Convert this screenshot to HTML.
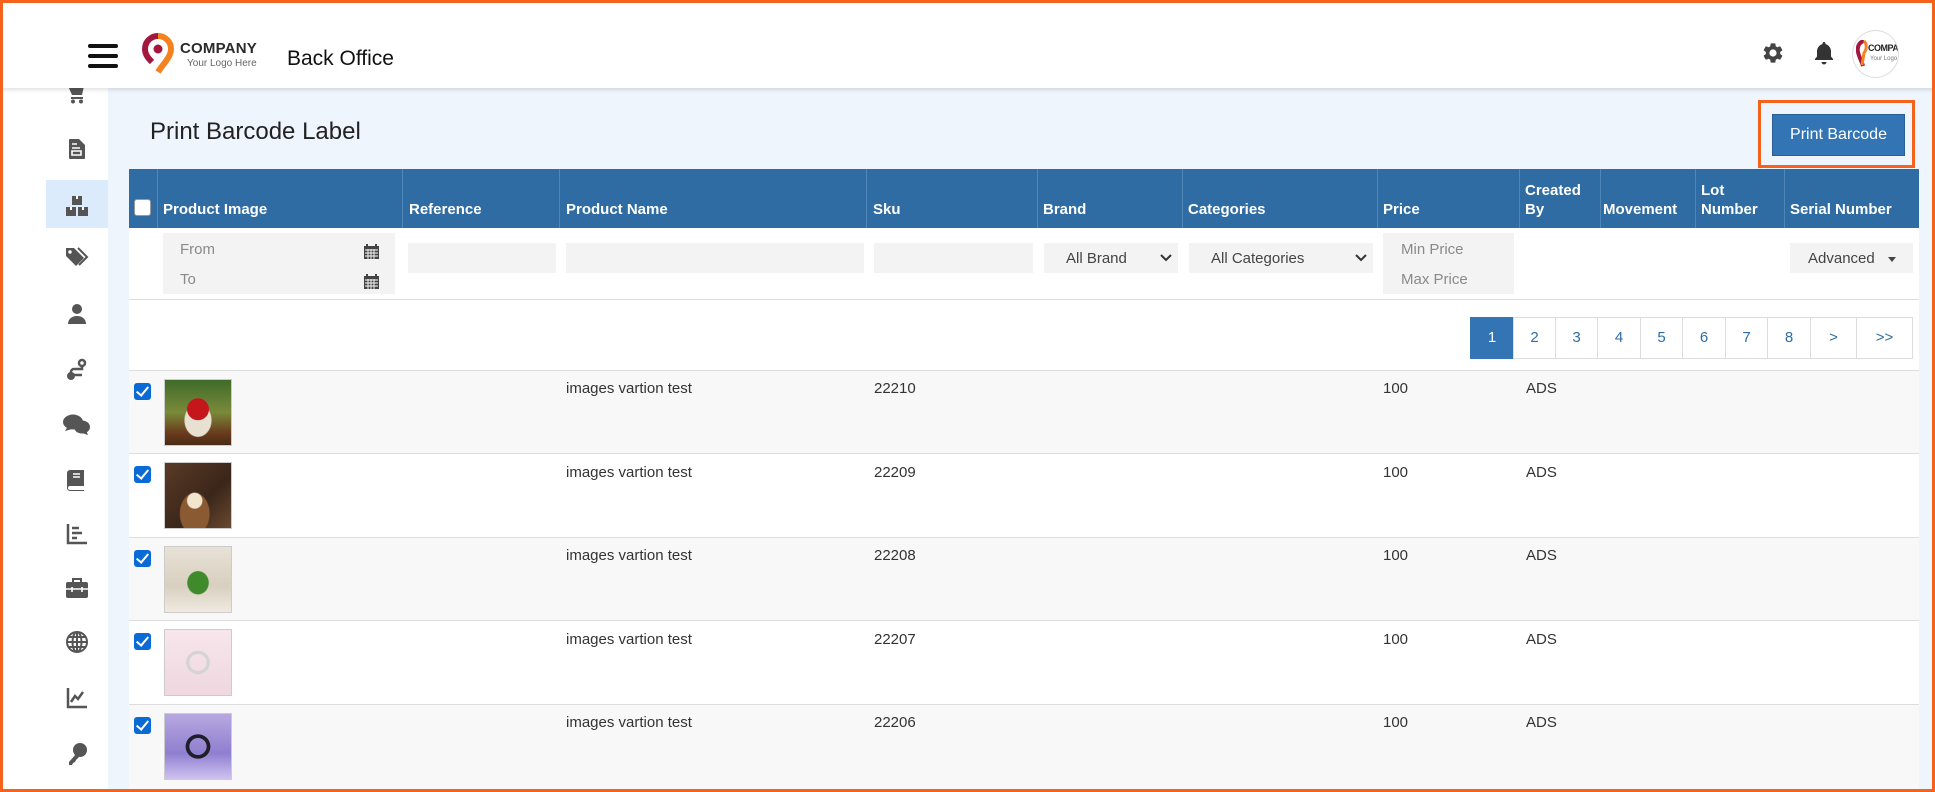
<!DOCTYPE html>
<html><head><meta charset="utf-8"><style>
*{box-sizing:border-box;margin:0;padding:0}
body{width:1935px;height:792px;overflow:hidden;background:#fff;font-family:"Liberation Sans",sans-serif;color:#333;position:relative}
.a{position:absolute}
.frame{left:0;top:0;width:1935px;height:792px;border:3px solid #f4621c;z-index:50;pointer-events:none}
.hdr{left:0;top:0;width:1935px;height:88px;background:#fff;box-shadow:0 2px 4px rgba(0,0,0,.12);z-index:10}
.side{left:42px;top:88px;width:66px;height:704px;background:#fff}
.main{left:108px;top:88px;width:1827px;height:704px;background:#eef5fc}
.th{top:169px;height:59px;background:#2f6ca3;color:#fff;font-weight:bold;font-size:15px}
.th span{position:absolute;bottom:9px;left:6px;line-height:19px}
.vl{top:169px;height:59px;width:1px;background:#4f86b8}
.inp{background:#f3f3f3}
.ph{color:#8a8a8a;font-size:15px}
.row{left:129px;width:1790px;height:83px;border-top:1px solid #ddd}
.cb{width:17px;height:17px;background:#0b6bd6;border-radius:3px}
.cb:after{content:"";position:absolute;left:5px;top:1px;width:5px;height:10px;border:solid #fff;border-width:0 2.5px 2.5px 0;transform:rotate(40deg)}
.txt{font-size:15px;color:#333}
.pg{top:317px;height:42px;border:1px solid #ddd;color:#2f6ca3;font-size:15px;text-align:center;line-height:40px;background:#fff}
.ic{fill:#555}
</style></head><body>
<div class="a frame"></div>
<div class="a hdr">
  <div class="a" style="left:88px;top:44px;width:30px;height:4px;background:#111;border-radius:2px"></div>
  <div class="a" style="left:88px;top:54px;width:30px;height:4px;background:#111;border-radius:2px"></div>
  <div class="a" style="left:88px;top:64px;width:30px;height:4px;background:#111;border-radius:2px"></div>
  <svg class="a" style="left:141px;top:33px" width="34" height="41" viewBox="0 0 34 41"><path d="M17 3a13 13 0 0 0-13 13c0 6 4 10 7 13" fill="none" stroke="#a3173f" stroke-width="6"/><path d="M17 3a13 13 0 0 1 13 13c0 8-8 15-13 23" fill="none" stroke="#f4821f" stroke-width="6"/><circle cx="17" cy="16" r="4.5" fill="#a3173f"/></svg>
  <div class="a" style="left:180px;top:40px;font-size:15px;font-weight:bold;color:#2a2a2a;letter-spacing:.2px">COMPANY</div>
  <div class="a" style="left:187px;top:58px;font-size:10px;color:#666">Your Logo Here</div>
  <div class="a" style="left:287px;top:47px;font-size:21px;color:#111">Back Office</div>
  <svg class="a" style="left:1761px;top:41px" width="24" height="24" viewBox="0 0 24 24"><path fill="#444" d="M19.14 12.94c.04-.3.06-.61.06-.94s-.02-.64-.07-.94l2.03-1.58a.49.49 0 0 0 .12-.61l-1.92-3.32a.49.49 0 0 0-.59-.22l-2.39.96c-.5-.38-1.03-.7-1.62-.94l-.36-2.54a.48.48 0 0 0-.48-.41h-3.84c-.24 0-.43.17-.47.41l-.36 2.54c-.59.24-1.13.57-1.62.94l-2.39-.96a.49.49 0 0 0-.59.22L2.74 8.87a.48.48 0 0 0 .12.61l2.03 1.58c-.05.3-.09.63-.09.94s.02.64.07.94l-2.03 1.58a.49.49 0 0 0-.12.61l1.92 3.32c.12.22.37.29.59.22l2.39-.96c.5.38 1.03.7 1.62.94l.36 2.54c.05.24.24.41.48.41h3.84c.24 0 .44-.17.47-.41l.36-2.54c.59-.24 1.13-.56 1.62-.94l2.39.96c.22.08.47 0 .59-.22l1.92-3.32a.48.48 0 0 0-.12-.61zM12 15.6a3.6 3.6 0 1 1 0-7.2 3.6 3.6 0 0 1 0 7.2z"/></svg>
  <svg class="a" style="left:1814px;top:41px" width="20" height="24" viewBox="0 0 20 24"><path fill="#333" d="M10 1c1 0 1.5.7 1.5 1.5v.6C15 4 17 7 17 10.5v5l2 2.5v1H1v-1l2-2.5v-5C3 7 5 4 8.5 3.1v-.6C8.5 1.7 9 1 10 1zM7.5 21h5a2.5 2.5 0 0 1-5 0z"/></svg>
  <div class="a" style="left:1852px;top:30px;width:47px;height:48px;border-radius:50%;border:1px solid #ddd;background:#fff;overflow:hidden">
    <svg class="a" style="left:3px;top:9px" width="12" height="28" viewBox="0 0 12 28"><path d="M8 1C3 2 1 7 2 12s4 10 5 14" fill="none" stroke="#a3173f" stroke-width="4"/><path d="M8 1c3 3 3 8 0 12l-2 12" fill="none" stroke="#f4821f" stroke-width="3"/></svg>
    <div class="a" style="left:15px;top:12px;font-size:9px;font-weight:bold;color:#222;letter-spacing:-.5px">COMPANY</div>
    <div class="a" style="left:17px;top:25px;font-size:6px;color:#777">Your Logo</div>
  </div>
</div>
<div class="a side"></div>
<div class="a" style="left:46px;top:180px;width:62px;height:48px;background:#dcebfb"></div>
<svg class="a" style="left:66px;top:84px" width="22" height="20" viewBox="0 0 22 20"><path class="ic" d="M2 2h16l-2 9H6zM5 13h12v2H5z"/><circle class="ic" cx="7" cy="17.5" r="2"/><circle class="ic" cx="15" cy="17.5" r="2"/></svg>
<svg class="a" style="left:68px;top:138px" width="18" height="22" viewBox="0 0 18 22"><path class="ic" d="M2 1h9l6 6v13a1 1 0 0 1-1 1H2a1 1 0 0 1-1-1V2a1 1 0 0 1 1-1z"/><path d="M4 6h5M4 10h8M4 13h9v4H4z" stroke="#fff" stroke-width="1.6" fill="none"/></svg>
<svg class="a" style="left:65px;top:195px" width="24" height="22" viewBox="0 0 24 22"><path class="ic" d="M7 1h10v9H7zM1 12h10v9H1zM13 12h10v9H13z"/><path d="M11 1v3h2V1M5 12v3h2v-3M17 12v3h2v-3" fill="#fff"/></svg>
<svg class="a" style="left:65px;top:246px" width="24" height="22" viewBox="0 0 24 22"><path class="ic" d="M1 2v8l10 10 8-8L9 2z"/><circle cx="5" cy="6" r="1.7" fill="#fff"/><path d="M13 2l9 9-8 8" fill="none" stroke="#555" stroke-width="2"/></svg>
<svg class="a" style="left:67px;top:303px" width="20" height="22" viewBox="0 0 20 22"><circle class="ic" cx="10" cy="6" r="5"/><path class="ic" d="M1 21c0-5 4-8 9-8s9 3 9 8z"/></svg>
<svg class="a" style="left:66px;top:358px" width="22" height="24" viewBox="0 0 22 24"><circle cx="16" cy="5" r="3" fill="none" stroke="#555" stroke-width="2.5"/><path d="M16 8v3H8a3 3 0 0 0 0 6h8" fill="none" stroke="#555" stroke-width="2.5"/><circle class="ic" cx="5" cy="18" r="4"/></svg>
<svg class="a" style="left:62px;top:413px" width="30" height="24" viewBox="0 0 30 24"><ellipse class="ic" cx="11" cy="9" rx="10" ry="7.5"/><path class="ic" d="M3 18l3-5 4 3z"/><ellipse class="ic" cx="20" cy="14" rx="8" ry="6.5"/><path class="ic" d="M26 22l-2-5-4 3z"/></svg>
<svg class="a" style="left:67px;top:469px" width="18" height="22" viewBox="0 0 18 22"><path class="ic" d="M3 1h14v16H3a2 2 0 0 0 0 4h14v1H3a3 3 0 0 1-3-3V4a3 3 0 0 1 3-3z"/><path d="M6 5h7M6 8h7" stroke="#fff" stroke-width="1.6"/></svg>
<svg class="a" style="left:66px;top:523px" width="22" height="22" viewBox="0 0 22 22"><path d="M2 1v19h19" fill="none" stroke="#555" stroke-width="2.5"/><path d="M6 5h7M6 10h10M6 15h5" stroke="#555" stroke-width="2.5"/></svg>
<svg class="a" style="left:65px;top:577px" width="24" height="22" viewBox="0 0 24 22"><path d="M8 5V2h8v3" fill="none" stroke="#555" stroke-width="2"/><rect class="ic" x="1" y="5" width="22" height="16" rx="2"/><path d="M1 12h22M7 10v5M17 10v5" stroke="#fff" stroke-width="1.6"/></svg>
<svg class="a" style="left:65px;top:630px" width="24" height="24" viewBox="0 0 24 24"><g fill="none" stroke="#555" stroke-width="2"><circle cx="12" cy="12" r="10"/><ellipse cx="12" cy="12" rx="4.5" ry="10"/><path d="M2 12h20M4 7h16M4 17h16M12 2v20"/></g></svg>
<svg class="a" style="left:66px;top:687px" width="22" height="22" viewBox="0 0 22 22"><path d="M2 1v19h19" fill="none" stroke="#555" stroke-width="2.5"/><path d="M5 15l4-6 3 3 5-7" fill="none" stroke="#555" stroke-width="2.5"/></svg>
<svg class="a" style="left:66px;top:742px" width="22" height="24" viewBox="0 0 22 24"><circle class="ic" cx="14" cy="8" r="7"/><path d="M10 12L3 20v3h3l1-2 2-1 1-2 3-3" fill="#555"/></svg>

<div class="a main"></div>
<div class="a" style="left:150px;top:118px;font-size:24px;color:#222">Print Barcode Label</div>
<div class="a" style="left:1758px;top:100px;width:157px;height:68px;border:3px solid #f4621c"></div>
<div class="a" style="left:1772px;top:114px;width:133px;height:42px;background:#3274b4;border:1px solid #2a5f95;color:#fff;font-size:16px;text-align:center;line-height:40px">Print Barcode</div>

<div class="a" style="left:129px;top:228px;width:1790px;height:564px;background:#fff"></div>
<div class="a th" style="left:129px;width:1790px"></div>
<div class="a" style="left:134px;top:199px;width:17px;height:17px;background:#fff;border:1px solid #999;border-radius:3px"></div>
<div class="a th" style="left:157px;width:244px"><span>Product Image</span></div>
<div class="a th" style="left:403px;width:156px"><span>Reference</span></div>
<div class="a th" style="left:560px;width:306px"><span>Product Name</span></div>
<div class="a th" style="left:867px;width:170px"><span>Sku</span></div>
<div class="a th" style="left:1037px;width:145px"><span>Brand</span></div>
<div class="a th" style="left:1182px;width:195px"><span>Categories</span></div>
<div class="a th" style="left:1377px;width:142px"><span>Price</span></div>
<div class="a th" style="left:1519px;width:81px"><span>Created<br>By</span></div>
<div class="a th" style="left:1600px;width:95px"><span style="left:3px">Movement</span></div>
<div class="a th" style="left:1695px;width:89px"><span>Lot<br>Number</span></div>
<div class="a th" style="left:1784px;width:135px"><span>Serial Number</span></div>
<div class="a vl" style="left:157px"></div><div class="a vl" style="left:402px"></div><div class="a vl" style="left:559px"></div><div class="a vl" style="left:866px"></div><div class="a vl" style="left:1037px"></div><div class="a vl" style="left:1182px"></div><div class="a vl" style="left:1377px"></div><div class="a vl" style="left:1519px"></div><div class="a vl" style="left:1600px"></div><div class="a vl" style="left:1695px"></div><div class="a vl" style="left:1784px"></div>

<div class="a inp" style="left:163px;top:233px;width:232px;height:61px"></div>
<div class="a ph" style="left:180px;top:241px">From</div>
<div class="a ph" style="left:180px;top:271px">To</div>
<svg class="a" style="left:363px;top:243px" width="17" height="17" viewBox="0 0 17 17"><path fill="#444" d="M1 3h15v13H1z"/><path d="M4 1v3M13 1v3" stroke="#444" stroke-width="2"/><path d="M2 7h13M2 10h13M2 13h13M5 6v10M8 6v10M11 6v10" stroke="#fff" stroke-width=".9"/></svg>
<svg class="a" style="left:363px;top:273px" width="17" height="17" viewBox="0 0 17 17"><path fill="#444" d="M1 3h15v13H1z"/><path d="M4 1v3M13 1v3" stroke="#444" stroke-width="2"/><path d="M2 7h13M2 10h13M2 13h13M5 6v10M8 6v10M11 6v10" stroke="#fff" stroke-width=".9"/></svg>
<div class="a inp" style="left:408px;top:243px;width:148px;height:30px"></div>
<div class="a inp" style="left:566px;top:243px;width:298px;height:30px"></div>
<div class="a inp" style="left:874px;top:243px;width:159px;height:30px"></div>
<div class="a inp" style="left:1044px;top:243px;width:134px;height:30px"></div>
<div class="a txt" style="left:1066px;top:250px;color:#444">All Brand</div>
<svg class="a" style="left:1160px;top:253px" width="12" height="9" viewBox="0 0 12 9"><path d="M1 2l5 5 5-5" fill="none" stroke="#333" stroke-width="2"/></svg>
<div class="a inp" style="left:1189px;top:243px;width:184px;height:30px"></div>
<div class="a txt" style="left:1211px;top:250px;color:#444">All Categories</div>
<svg class="a" style="left:1355px;top:253px" width="12" height="9" viewBox="0 0 12 9"><path d="M1 2l5 5 5-5" fill="none" stroke="#333" stroke-width="2"/></svg>
<div class="a inp" style="left:1383px;top:233px;width:131px;height:61px"></div>
<div class="a ph" style="left:1401px;top:241px">Min Price</div>
<div class="a ph" style="left:1401px;top:271px">Max Price</div>
<div class="a inp" style="left:1790px;top:243px;width:123px;height:30px"></div>
<div class="a txt" style="left:1808px;top:250px;color:#444">Advanced</div>
<div class="a" style="left:1888px;top:257px;border:4.5px solid transparent;border-top:5px solid #444"></div>

<div class="a" style="left:129px;top:299px;width:1790px;height:1px;background:#ddd"></div>
<div class="a pg" style="left:1470px;width:44px;background:#3274b4;color:#fff;border-color:#3274b4">1</div>
<div class="a pg" style="left:1513px;width:43px">2</div>
<div class="a pg" style="left:1555px;width:43px">3</div>
<div class="a pg" style="left:1597px;width:44px">4</div>
<div class="a pg" style="left:1640px;width:43px">5</div>
<div class="a pg" style="left:1682px;width:44px">6</div>
<div class="a pg" style="left:1725px;width:43px">7</div>
<div class="a pg" style="left:1767px;width:44px">8</div>
<div class="a pg" style="left:1810px;width:47px">&gt;</div>
<div class="a pg" style="left:1856px;width:57px">&gt;&gt;</div>

<div class="a row" style="top:370px;background:#f8f8f8"></div>
<div class="a row" style="top:453px;background:#fff"></div>
<div class="a row" style="top:537px;background:#f8f8f8"></div>
<div class="a row" style="top:620px;background:#fff"></div>
<div class="a row" style="top:704px;background:#f8f8f8;height:88px"></div>

<div class="a cb" style="left:134px;top:383px"></div>
<div class="a cb" style="left:134px;top:466px"></div>
<div class="a cb" style="left:134px;top:550px"></div>
<div class="a cb" style="left:134px;top:633px"></div>
<div class="a cb" style="left:134px;top:717px"></div>

<div class="a" style="left:164px;top:379px;width:68px;height:67px;border:1px solid #ccc;background:radial-gradient(circle at 50% 45%,#c5161c 0 22%,transparent 23%),radial-gradient(ellipse at 50% 62%,#e8e0d0 0 28%,transparent 30%),linear-gradient(#3f6b2a,#7a8a3a 50%,#6b3e1e 80%,#4a2a15)"></div>
<div class="a" style="left:164px;top:462px;width:68px;height:67px;border:1px solid #ccc;background:radial-gradient(ellipse at 45% 58%,#f3e6cf 0 14%,transparent 16%),radial-gradient(ellipse at 45% 78%,#8a5a32 0 28%,transparent 30%),linear-gradient(135deg,#5a3a26,#3a261a 60%,#6a4a30)"></div>
<div class="a" style="left:164px;top:546px;width:68px;height:67px;border:1px solid #ccc;background:radial-gradient(ellipse at 50% 55%,#3f8a2a 0 22%,transparent 24%),linear-gradient(#e8e2d6,#d8cfbf 60%,#efe9e0)"></div>
<div class="a" style="left:164px;top:629px;width:68px;height:67px;border:1px solid #ccc;background:radial-gradient(ellipse at 50% 50%,transparent 0 18%,#d4d4d4 19% 25%,transparent 26%),linear-gradient(#f7e6ec,#efd7df)"></div>
<div class="a" style="left:164px;top:713px;width:68px;height:67px;border:1px solid #ccc;background:radial-gradient(ellipse at 50% 50%,transparent 0 18%,#1f1f2a 19% 26%,transparent 27%),linear-gradient(#b8a8e0,#8f7fd0 60%,#cfc2f0)"></div>

<div class="a txt" style="left:566px;top:380px">images vartion test</div><div class="a txt" style="left:874px;top:380px">22210</div><div class="a txt" style="left:1383px;top:380px">100</div><div class="a txt" style="left:1526px;top:380px">ADS</div>
<div class="a txt" style="left:566px;top:464px">images vartion test</div><div class="a txt" style="left:874px;top:464px">22209</div><div class="a txt" style="left:1383px;top:464px">100</div><div class="a txt" style="left:1526px;top:464px">ADS</div>
<div class="a txt" style="left:566px;top:547px">images vartion test</div><div class="a txt" style="left:874px;top:547px">22208</div><div class="a txt" style="left:1383px;top:547px">100</div><div class="a txt" style="left:1526px;top:547px">ADS</div>
<div class="a txt" style="left:566px;top:631px">images vartion test</div><div class="a txt" style="left:874px;top:631px">22207</div><div class="a txt" style="left:1383px;top:631px">100</div><div class="a txt" style="left:1526px;top:631px">ADS</div>
<div class="a txt" style="left:566px;top:714px">images vartion test</div><div class="a txt" style="left:874px;top:714px">22206</div><div class="a txt" style="left:1383px;top:714px">100</div><div class="a txt" style="left:1526px;top:714px">ADS</div>
</body></html>
